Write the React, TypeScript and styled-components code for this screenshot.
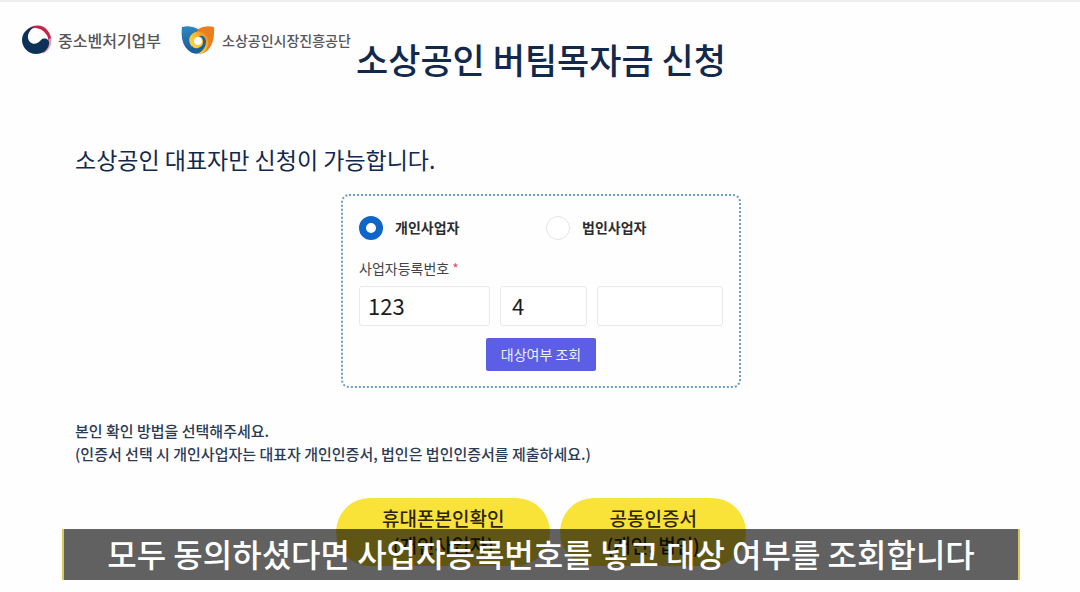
import React, { useState } from "react";
import styled, { createGlobalStyle } from "styled-components";

const GlobalStyle = createGlobalStyle`
  * { box-sizing: border-box; }
  body {
    margin: 0;
    background: #fefefe;
    color: #12284c;
    font-family: "Noto Sans CJK KR", "Noto Sans", sans-serif;
  }
  button, input { font-family: inherit; }
`;

const Page = styled.div`
  position: relative;
  min-height: 100vh;
  padding-bottom: 24px;
  border-top: 2px solid #efefef;
`;

const Header = styled.header`
  display: grid;
  grid-template-columns: minmax(0, 1fr) auto minmax(0, 1fr);
  padding: 18px 0 0 2px;
`;

const Logos = styled.div`
  display: flex;
  align-items: center;
  gap: 20px;
  height: 40px;
  padding-left: 20px;
  white-space: nowrap;
`;

const Logo = styled.a<{ $size: number; $gap: number }>`
  display: flex;
  align-items: center;
  gap: ${(p) => p.$gap}px;
  color: #55555a;
  font-size: ${(p) => p.$size}px;
  font-weight: 500;
  line-height: 24px;
  text-decoration: none;
`;

const Title = styled.h1`
  margin: 13px 0 0;
  font-size: 35px;
  font-weight: 500;
  line-height: 52px;
  white-space: nowrap;
`;

const Main = styled.main`
  padding: 57px 73px 0 75px;
`;

const Lead = styled.p`
  margin: 0;
  font-size: 23px;
  line-height: 34px;
`;

const Card = styled.form`
  display: flex;
  flex-direction: column;
  width: 400px;
  max-width: 100%;
  margin: 18px auto 0;
  padding: 20px 16px 15px;
  border: 2px dotted #6b9fc4;
  border-radius: 8px;
`;

const RadioRow = styled.div`
  display: grid;
  grid-template-columns: 1fr 1fr;
  column-gap: 10px;
`;

const RadioLabel = styled.label`
  display: flex;
  gap: 12px;
  color: #2c2c2e;
  font-size: 14px;
  font-weight: 700;
  line-height: 22px;
`;

const Radio = styled.input`
  appearance: none;
  width: 24px;
  height: 24px;
  margin: 0;
  border: 1px solid #e4e4e6;
  border-radius: 50%;
  background: #fff;
  &:checked {
    border: 7px solid #1066c8;
  }
`;

const FieldLabel = styled.label`
  margin-top: 18px;
  color: #444448;
  font-size: 14px;
  line-height: 20px;
`;

const Required = styled.span`
  margin-left: 3px;
  color: #dc5468;
`;

const Fields = styled.div`
  display: grid;
  grid-template-columns: 131fr 87fr 126fr;
  gap: 10px;
  margin-top: 8px;
`;

const NumberInput = styled.input<{ $inset?: number }>`
  width: 100%;
  min-width: 0;
  height: 40px;
  padding: 0 8px 2px ${(p) => p.$inset ?? 8}px;
  border: 1px solid #e9e9eb;
  border-radius: 3px;
  background: #fff;
  color: #1c1c1e;
  font-size: 22px;
`;

const SearchButton = styled.button`
  align-self: center;
  margin-top: 12px;
  padding: 0 15px;
  border: 0;
  border-radius: 2px;
  background: #5c5ee6;
  color: #f0f0ff;
  font-size: 14px;
  line-height: 33px;
`;

const Guide = styled.p`
  margin: 31px 0 0;
  color: #2c3b55;
  font-size: 15px;
  font-weight: 500;
  line-height: 23px;
`;

const Methods = styled.div`
  display: flex;
  justify-content: center;
  gap: 10px;
  margin-top: 33px;
`;

const MethodButton = styled.button`
  padding: 6px 46px 8px;
  border: 0;
  border-radius: 34px;
  background: #fae338;
  color: #2c2508;
  font-size: 19px;
  font-weight: 500;
  line-height: 27px;
`;

const Caption = styled.div`
  position: absolute;
  right: 60px;
  bottom: 12px;
  left: 62px;
  padding-bottom: 2px;
  border: solid #dcc75a;
  border-width: 0 2px;
  background: rgba(0, 0, 0, 0.62);
  color: #fff;
  font-size: 32px;
  font-weight: 500;
  line-height: 49px;
  text-align: center;
`;

const MinistryMark = () => (
  <svg width="30" height="30" viewBox="0 0 30 30" aria-hidden="true">
    <path d="M5 5C11-1 21-1 26 6C32 14 29 24 21 28C27 22 28 14 24 9C20 3 12 1 5 5Z" fill="#c3264c" />
    <path d="M29 13C30 20 27 26 20 29C26 24 27 19 27 14Z" fill="#e59aaa" />
    <path d="M12 2C4 3 0 9 0 15C0 23 7 29 14 29C21 29 26 25 27 19C28 14 22 12 19 15C16 19 11 20 8 17C4 13 6 6 12 2Z" fill="#0d3158" />
  </svg>
);

const AgencyMark = () => (
  <svg width="34" height="28" viewBox="0 0 34 28" aria-hidden="true">
    <defs>
      <linearGradient id="swirl" x1="0" y1="1" x2="1" y2="0">
        <stop offset="0" stopColor="#fbe04a" />
        <stop offset="0.5" stopColor="#f9c234" />
        <stop offset="1" stopColor="#ea7d1c" />
      </linearGradient>
      <linearGradient id="shield" x1="0" y1="0" x2="0" y2="1">
        <stop offset="0" stopColor="#2b87c0" />
        <stop offset="1" stopColor="#1b5794" />
      </linearGradient>
    </defs>
    <path d="M1 1Q10-1 17 3L20 12L20 27Q12 29 7 24Q-1 17 1 1Z" fill="url(#shield)" />
    <path d="M17 3Q24-1 33 1Q34 17 27 24Q23 28 17 28Q12 18 17 3Z" fill="#ea7f1f" />
    <path d="M11 21Q6 14 10 9Q15 3 23 7Q30 13 26 22Q23 28 16 28L13 23Z" fill="url(#swirl)" />
    <path d="M11 20Q13 23 17 22Q23 20 22 14Q21 11 18 10Q24 9 25 15Q25 23 18 27Q12 29 8 24Z" fill="#1b5f9e" />
    <circle cx="17" cy="15" r="4" fill="#fefefe" />
  </svg>
);

export default function App() {
  const [kind, setKind] = useState("personal");
  return (
    <Page>
      <GlobalStyle />
      <Header>
        <Logos>
          <Logo href="#ministry" $size={16} $gap={6}>
            <MinistryMark />
            중소벤처기업부
          </Logo>
          <Logo href="#agency" $size={14} $gap={7}>
            <AgencyMark />
            소상공인시장진흥공단
          </Logo>
        </Logos>
        <Title>소상공인 버팀목자금 신청</Title>
      </Header>
      <Main>
        <Lead>소상공인 대표자만 신청이 가능합니다.</Lead>
        <Card onSubmit={(e) => e.preventDefault()}>
          <RadioRow>
            <RadioLabel>
              <Radio type="radio" name="kind" checked={kind === "personal"} onChange={() => setKind("personal")} />
              개인사업자
            </RadioLabel>
            <RadioLabel>
              <Radio type="radio" name="kind" checked={kind === "corporate"} onChange={() => setKind("corporate")} />
              법인사업자
            </RadioLabel>
          </RadioRow>
          <FieldLabel htmlFor="biz-1">
            사업자등록번호<Required>*</Required>
          </FieldLabel>
          <Fields>
            <NumberInput id="biz-1" defaultValue="123" />
            <NumberInput aria-label="사업자등록번호 가운데 자리" defaultValue="4" $inset={11} />
            <NumberInput aria-label="사업자등록번호 끝 자리" />
          </Fields>
          <SearchButton type="submit">대상여부 조회</SearchButton>
        </Card>
        <Guide>
          본인 확인 방법을 선택해주세요.
          <br />
          (인증서 선택 시 개인사업자는 대표자 개인인증서, 법인은 법인인증서를 제출하세요.)
        </Guide>
        <Methods>
          <MethodButton type="button">
            휴대폰본인확인
            <br />
            (개인사업자)
          </MethodButton>
          <MethodButton type="button">
            공동인증서
            <br />
            (개인, 법인)
          </MethodButton>
        </Methods>
      </Main>
      <Caption>모두 동의하셨다면 사업자등록번호를 넣고 대상 여부를 조회합니다</Caption>
    </Page>
  );
}
